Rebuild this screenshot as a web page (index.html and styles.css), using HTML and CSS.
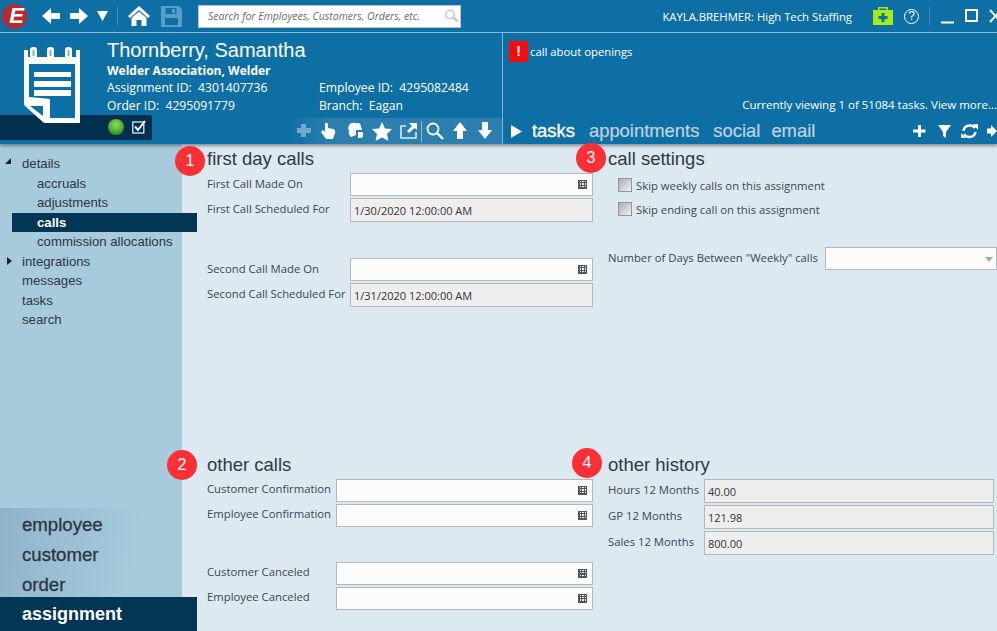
FILE: index.html
```html
<!DOCTYPE html>
<html lang="en">
<head>
  <meta charset="UTF-8">
  <title>Assignment - calls</title>
  <link rel="stylesheet" href="styles.css">
</head>
<body>
  <!-- top bar -->
  <div class="topbar">
    <div class="logo"><span>E</span></div>
    <svg class="tb-nav" width="76" height="20" viewBox="0 0 76 20">
      <path fill="#fff" d="M1 10 L10 2 L10 7 L19 7 L19 13 L10 13 L10 18 Z"/>
      <path fill="#fff" d="M47 10 L38 2 L38 7 L29 7 L29 13 L38 13 L38 18 Z"/>
      <path fill="#fff" d="M56 5 L67 5 L61.500 15 Z"/>
    </svg>
    <div class="tb-sep"></div>
    <svg class="tb-home" width="22" height="20" viewBox="0 0 22 20">
      <path fill="#fff" d="M11 0 L22 10 L20 12 L11 4 L2 12 L0 10 Z"/>
      <path fill="#fff" d="M3.500 12 L11 5.500 L18.500 12 L18.500 20 L13.500 20 L13.500 14 L8.500 14 L8.500 20 L3.500 20 Z"/>
    </svg>
    <svg class="tb-save" width="21" height="21" viewBox="0 0 21 21">
      <path fill="#5a9dc6" d="M0 0 L18 0 L21 3 L21 21 L0 21 Z"/>
      <rect x="4.500" y="2" width="11" height="6" fill="#0e6fa5"/>
      <rect x="11" y="3" width="3" height="4" fill="#5a9dc6"/>
      <rect x="4" y="12" width="13" height="7" fill="#0e6fa5"/>
    </svg>
    <div class="search">
      <span>Search for Employees, Customers, Orders, etc.</span>
      <svg width="15" height="14" viewBox="0 0 15 14">
        <circle cx="6" cy="5.500" r="4.200" fill="none" stroke="#c9c9c9" stroke-width="1.600"/>
        <path d="M9 8.500 L14 12.500" stroke="#c9c9c9" stroke-width="2.400"/>
      </svg>
    </div>
    <div class="user">KAYLA.BREHMER: High Tech Staffing</div>
    <svg class="tb-kit" width="20" height="18" viewBox="0 0 20 18">
      <path fill="#a6ea1a" d="M0 3 L5 3 L5 1 Q5 0 6 0 L14 0 Q15 0 15 1 L15 3 L20 3 L20 18 L0 18 Z"/>
      <rect x="6.500" y="1.500" width="7" height="1.500" fill="#0e6fa5"/>
      <path fill="#0e6fa5" d="M8.500 6 L11.500 6 L11.500 9 L14.500 9 L14.500 12 L11.500 12 L11.500 15 L8.500 15 L8.500 12 L5.500 12 L5.500 9 L8.500 9 Z"/>
    </svg>
    <div class="help">?</div>
    <div class="tb-sep tb-sep-right"></div>
    <svg class="win" width="56" height="16" viewBox="0 0 56 16">
      <path d="M0 14.500 L13 14.500" stroke="#fff" stroke-width="2"/>
      <rect x="25" y="2" width="11" height="11" fill="none" stroke="#fff" stroke-width="2"/>
      <path d="M49 2 L60 14 M60 2 L49 14" stroke="#fff" stroke-width="2"/>
    </svg>
  </div>

  <!-- record header -->
  <div class="header">
    <div class="rec">
      <div class="rec-band">
        <div class="ball"></div>
        <svg class="band-check" width="14" height="14" viewBox="0 0 14 14">
          <rect x="0.800" y="2" width="11" height="11" fill="none" stroke="#dfe9ef" stroke-width="1.300"/>
          <path d="M3 6.500 L6 10 L13 1" fill="none" stroke="#fff" stroke-width="2"/>
        </svg>
      </div>
      <svg class="notepad" width="56" height="77" viewBox="0 0 56 77">
        <path fill="#fff" d="M0 3 L56 3 L56 76 L20 76 L0 58 Z"/>
        <path fill="#0e6fa5" d="M4 3 L52 3 L52 10 L4 10 Z"/>
        <rect x="6" y="0" width="7" height="14" rx="3" fill="#fff"/>
        <rect x="23" y="0" width="7" height="14" rx="3" fill="#fff"/>
        <rect x="41" y="0" width="7" height="14" rx="3" fill="#fff"/>
        <rect x="8.500" y="3" width="2" height="6" fill="#7fb2d0"/>
        <rect x="25.500" y="3" width="2" height="6" fill="#7fb2d0"/>
        <rect x="43.500" y="3" width="2" height="6" fill="#7fb2d0"/>
        <path fill="#0e6fa5" d="M5 17 L51 17 L51 71 L26 71 L26 52 L5 50 Z"/>
        <path fill="#0e6fa5" d="M6 59 L19 59 L19 69 Z"/>
        <rect x="10" y="25" width="37" height="5" fill="#fff"/>
        <rect x="10" y="34" width="37" height="6" fill="#fff"/>
        <rect x="10" y="43" width="37" height="6" fill="#fff"/>
      </svg>
      <div class="rec-info">
        <div class="rec-name">Thornberry, Samantha</div>
        <div class="rec-job">Welder Association, Welder</div>
        <div class="rec-ids">
          <span>Assignment ID:&nbsp; 4301407736</span><span>Employee ID:&nbsp; 4295082484</span>
          <span>Order ID:&nbsp; 4295091779</span><span>Branch:&nbsp; Eagan</span>
        </div>
      </div>
      <div class="rec-tools">
        <svg width="212" height="25" viewBox="0 0 212 25">
          <path fill="#73aacb" d="M11 6 L16 6 L16 10 L21 10 L21 15 L16 15 L16 19 L11 19 L11 15 L7 15 L7 10 L11 10 Z"/>
          <path fill="#fff" d="M35 5 Q37 4 38 6 L38 10 L43 11 Q46 12 45 15 L43 21 L36 21 L31 14 L33 12 L35 14 Z"/>
          <path fill="#fff" d="M60 6 Q62 4 65 5 L69 5 Q71 6 71 9 L72 12 L66 12 L66 17 L61 19 Q58 16 59 13 Q57 9 60 6 Z M68 14 L73 14 L73 19 L71 20 L68 20 Z"/>
          <path fill="#fff" d="M92 4 L95 10.500 L102 11 L97 16 L98.500 23 L92 19.500 L85.500 23 L87 16 L82 11 L89 10.500 Z"/>
          <path fill="none" stroke="#dcebf4" stroke-width="1.600" d="M116 8 L111 8 L111 20 L126 20 L126 14"/>
          <path fill="#fff" d="M119 5 L127 5 L127 12 L124.500 10 L119 15 L117 13 L122 8 Z"/>
          <path d="M131.500 3 L131.500 24" stroke="#8ab8d3" stroke-width="1"/>
          <circle cx="143" cy="11" r="5.500" fill="none" stroke="#fff" stroke-width="1.800"/>
          <path d="M147 15 L153 21" stroke="#fff" stroke-width="2.400"/>
          <path fill="#fff" d="M170 4 L177 13 L173 13 L173 21 L167 21 L167 13 L163 13 Z"/>
          <path fill="#fff" d="M195 21 L202 12 L198 12 L198 4 L192 4 L192 12 L188 12 Z"/>
        </svg>
      </div>
    </div>
    <div class="tasks">
      <div class="note"><span class="alert">!</span>call about openings</div>
      <div class="viewing">Currently viewing 1 of 51084 tasks. View more...</div>
      <div class="tabs">
        <svg class="tab-play" width="11" height="13" viewBox="0 0 11 13"><path fill="#fff" d="M0 0 L11 6.500 L0 13 Z"/></svg>
        <span class="tab tab-on">tasks</span>
        <span class="tab">appointments</span>
        <span class="tab">social</span>
        <span class="tab tab-email">email</span>
        <svg class="tab-tools" width="84" height="18" viewBox="0 0 84 18">
          <path fill="#fff" d="M5 3 L8 3 L8 7.500 L12.500 7.500 L12.500 10.500 L8 10.500 L8 15 L5 15 L5 10.500 L0 10.500 L0 7.500 L5 7.500 Z"/>
          <path fill="#fff" d="M25 3 L38 3 L33 10 L33 16 L30 14 L30 10 Z"/>
          <path fill="none" stroke="#fff" stroke-width="2.400" d="M62 6 Q60 3 56 3.500 Q51 4 50.500 9 M51 12 Q53 15.500 57 15 Q61.500 14.500 62.500 10"/>
          <path fill="#fff" d="M60 2 L65 2 L65 8 Z M48 11 L53 16 L48 16 Z"/>
          <path fill="#fff" d="M84 9 L78 3 L78 6.500 L74 6.500 L74 11.500 L78 11.500 L78 15 Z"/>
        </svg>
      </div>
    </div>
  </div>

  <div class="body">
    <!-- left menu -->
    <div class="side">
      <ul class="tree">
        <li><i class="arrow-open"></i>details</li>
        <li class="sub">accruals</li>
        <li class="sub">adjustments</li>
        <li class="sub selected">calls</li>
        <li class="sub">commission allocations</li>
        <li><i class="arrow-closed"></i>integrations</li>
        <li>messages</li>
        <li>tasks</li>
        <li>search</li>
      </ul>
      <ul class="entity">
        <li>employee</li>
        <li>customer</li>
        <li>order</li>
        <li class="active">assignment</li>
      </ul>
    </div>

    <!-- form -->
    <div class="content">
      <section class="sec">
        <span class="badge badge1">1</span>
        <h2>first day calls</h2>
        <div class="row"><label>First Call Made On</label><div class="inp"><i class="cal"></i></div></div>
        <div class="row"><label>First Call Scheduled For</label><div class="inp ro">1/30/2020 12:00:00 AM</div></div>
        <div class="row row-gap"><label>Second Call Made On</label><div class="inp"><i class="cal"></i></div></div>
        <div class="row"><label>Second Call Scheduled For</label><div class="inp ro">1/31/2020 12:00:00 AM</div></div>
      </section>

      <section class="sec">
        <span class="badge badge3">3</span>
        <h2>call settings</h2>
        <div class="chk"><i></i>Skip weekly calls on this assignment</div>
        <div class="chk"><i></i>Skip ending call on this assignment</div>
        <div class="row row-days"><label>Number of Days Between "Weekly" calls</label><div class="select"><b></b></div></div>
      </section>

      <section class="sec sec-low">
        <span class="badge badge2">2</span>
        <h2>other calls</h2>
        <div class="row row-short"><label>Customer Confirmation</label><div class="inp"><i class="cal"></i></div></div>
        <div class="row row-short"><label>Employee Confirmation</label><div class="inp"><i class="cal"></i></div></div>
        <div class="row row-short row-gap2"><label>Customer Canceled</label><div class="inp"><i class="cal"></i></div></div>
        <div class="row row-short"><label>Employee Canceled</label><div class="inp"><i class="cal"></i></div></div>
      </section>

      <section class="sec sec-low">
        <span class="badge badge4">4</span>
        <h2>other history</h2>
        <div class="row row-hist"><label>Hours 12 Months</label><div class="inp ro">40.00</div></div>
        <div class="row row-hist"><label>GP 12 Months</label><div class="inp ro">121.98</div></div>
        <div class="row row-hist"><label>Sales 12 Months</label><div class="inp ro">800.00</div></div>
      </section>
    </div>
  </div>
</body>
</html>
```

FILE: styles.css
```css
body {
  margin: 0;
  width: 997px;
  height: 631px;
  overflow: hidden;
  font-family: "Open Sans", "Liberation Sans", sans-serif;
  font-size: 11.300px;
  color: #3a4654;
  background: #dce9f1;
}

/* top bar */
.topbar {
  height: 32px;
  display: flex;
  align-items: center;
  background: #0e6fa5;
  border-bottom: 1px solid #8dbbd6;
  color: #fff;
}
.logo {
  width: 25px;
  height: 25px;
  margin-left: 2px;
  border-radius: 50%;
  background: #b52a33;
  display: flex;
  align-items: center;
  justify-content: center;
}
.logo span {
  font: italic bold 22px "Liberation Sans", sans-serif;
  color: #fff;
  margin-left: 4px;
}
.tb-nav { margin-left: 14px; }
.tb-sep {
  width: 1px;
  height: 20px;
  background: #3d8bb7;
}
.tb-home { margin-left: 10px; }
.tb-save { margin-left: 11px; }
.search {
  width: 263px;
  height: 23px;
  margin-left: 16px;
  padding-left: 9px;
  box-sizing: border-box;
  display: flex;
  align-items: center;
  justify-content: space-between;
  background: #fff;
  border: 1px solid #b9c3c9;
  font-style: italic;
  font-size: 10.500px;
  color: #6c6c6c;
}
.search svg { margin-right: 1px; }
.user {
  margin-left: auto;
  font-size: 11.300px;
}
.tb-kit { margin-left: 21px; }
.help {
  width: 13px;
  height: 13px;
  margin-left: 11px;
  border: 1.500px solid #fff;
  border-radius: 50%;
  text-align: center;
  font: 12px/13px "Liberation Sans", sans-serif;
}
.tb-sep-right { margin-left: 10px; }
.win { margin-left: 11px; flex-shrink: 0; }

/* record header */
.header {
  height: 111px;
  display: flex;
  background: #0e6fa5;
  color: #fff;
  position: relative;
  box-shadow: 0 2px 3px rgba(60, 70, 80, 0.55);
  z-index: 3;
}
.rec {
  width: 503px;
  position: relative;
  box-sizing: border-box;
  padding: 5px 0 0 107px;
  border-right: 1px solid #7eb2d0;
}
.notepad {
  position: absolute;
  left: 24px;
  top: 14px;
}
.rec-band {
  position: absolute;
  left: 0;
  top: 82px;
  width: 152px;
  height: 25px;
  background: #03304f;
}
.ball {
  position: absolute;
  left: 108px;
  top: 4px;
  width: 16px;
  height: 16px;
  border-radius: 50%;
  background: radial-gradient(circle at 50% 35%, #8fdc5a, #2f9a1c 75%);
}
.band-check {
  position: absolute;
  left: 132px;
  top: 5px;
}
.rec-name {
  font: 20px/24px "Liberation Sans", sans-serif;
}
.rec-job {
  font-size: 12px;
  font-weight: 700;
  line-height: 17px;
}
.rec-ids {
  display: grid;
  grid-template-columns: 212px auto;
  font-size: 12.150px;
  line-height: 18px;
}
.rec-tools {
  position: absolute;
  left: 290px;
  right: 0;
  top: 85px;
  height: 26px;
  background: linear-gradient(90deg, #0e6fa5, #2b7fae 40px);
}
.rec-tools svg { display: block; }

.tasks {
  flex: 1;
  display: flex;
  flex-direction: column;
  min-width: 0;
}
.note {
  display: flex;
  align-items: center;
  margin: 8px 0 0 6px;
  font-size: 11.300px;
}
.alert {
  width: 19px;
  height: 21px;
  margin-right: 2px;
  background: #f50c0c;
  text-align: center;
  font: bold 14px/21px "Liberation Sans", sans-serif;
}
.viewing {
  margin-top: 35px;
  text-align: right;
  white-space: nowrap;
  font-size: 11.500px;
  line-height: 15px;
}
.tabs {
  display: flex;
  align-items: center;
  margin-top: 7px;
  padding-left: 8px;
  font: 18.400px/24px "Liberation Sans", sans-serif;
  white-space: nowrap;
}
.tab { margin-left: 14px; color: #bed3e0; -webkit-text-stroke: 0.200px #bed3e0; }
.tab-play + .tab { margin-left: 10px; }
.tab-on { color: #fff; -webkit-text-stroke: 0.300px #fff; }
.tab-email { margin-left: 11px; }
.tab-tools {
  position: absolute;
  left: 913px;
  top: 89px;
}

/* body */
.body {
  display: flex;
  height: 488px;
}
.side {
  width: 182px;
  flex-shrink: 0;
  display: flex;
  flex-direction: column;
  justify-content: space-between;
  background: #a8cadd;
  position: relative;
  z-index: 2;
}
.tree, .entity {
  list-style: none;
  margin: 0;
  padding: 0;
  font-family: "Liberation Sans", sans-serif;
  color: #2c3640;
}
.tree {
  padding-top: 10px;
  font-size: 13.200px;
}
.tree li {
  position: relative;
  height: 19.500px;
  line-height: 20px;
  padding-left: 22px;
}
.tree .sub {
  padding-left: 25px;
  margin-left: 12px;
}
.tree .selected {
  margin-right: -15px;
  line-height: 19px;
  background: #033655;
  color: #fff;
  font-weight: 700;
}
.arrow-open {
  position: absolute;
  left: 5px;
  top: 4px;
  width: 0;
  height: 0;
  border-bottom: 6px solid #222;
  border-left: 6px solid transparent;
}
.arrow-closed {
  position: absolute;
  left: 7px;
  top: 5px;
  width: 0;
  height: 0;
  border-left: 5px solid #222;
  border-top: 4px solid transparent;
  border-bottom: 4px solid transparent;
}
.entity {
  height: 124px;
  padding-top: 2px;
  box-sizing: border-box;
  background: linear-gradient(100deg, #8fb4ca, #a7c9dc 70%);
  font-size: 18.600px;
  font-weight: 400;
  -webkit-text-stroke: 0.300px #2c3640;
}
.entity li {
  height: 30px;
  line-height: 30px;
  padding-left: 22px;
}
.entity .active {
  height: 34px;
  line-height: 35px;
  margin-top: -3px;
  margin-right: -15px;
  background: #033655;
  color: #fff;
  font-size: 18px;
  font-weight: 700;
  -webkit-text-stroke: 0;
}

/* form sections */
.content {
  flex: 1;
  display: grid;
  grid-template-columns: 386px 389px;
  grid-template-rows: 309px auto;
  column-gap: 15px;
  padding-left: 25px;
}
.sec { position: relative; }
.sec h2 {
  margin: 3px 0 0;
  height: 26px;
  font: 400 18.500px/24px "Liberation Sans", sans-serif;
  color: #2e3a46;
}
.sec-low h2 { margin-top: 0; height: 26px; }
.badge {
  position: absolute;
  width: 30px;
  height: 30px;
  border-radius: 50%;
  background: #fb3036;
  color: #fff;
  text-align: center;
  font: 16px/30px "Liberation Sans", sans-serif;
  z-index: 4;
}
.badge1 { left: -32px; top: 2px; }
.badge3 { left: -32px; top: -1px; }
.badge2 { left: -40px; top: -3px; }
.badge4 { left: -36px; top: -5px; }

.row {
  display: flex;
  align-items: center;
  margin-bottom: 2px;
}
.row label {
  width: 143px;
  flex-shrink: 0;
  margin-top: -3px;
  white-space: nowrap;
}
.inp {
  flex: 1;
  height: 23px;
  box-sizing: border-box;
  border: 1px solid #b4b8bb;
  background: #fcfcfc;
  display: flex;
  align-items: center;
  justify-content: flex-end;
  padding: 0 5px;
  font-size: 11px;
  color: #333;
}
.inp.ro {
  height: 24px;
  justify-content: flex-start;
  padding: 0 3px;
  background: #eeeeee;
}
.cal {
  width: 7px;
  height: 7px;
  border: 0.500px solid #555;
  background:
    repeating-linear-gradient(90deg, #555 0 1px, transparent 1px 2.500px),
    repeating-linear-gradient(0deg, #555 0 1px, #eee 1px 2.500px);
}
.row-gap { margin-top: 36px; }
.row-short label { width: 129px; margin-top: -5px; }
.row-short .inp { height: 23px; }
.row-gap2 { margin-top: 35px; }
.row-hist {
  width: 386px;
  margin-bottom: 2px;
}
.row-hist label { width: 96px; margin-top: -4px; }

.chk {
  display: flex;
  align-items: center;
  height: 24px;
  margin-left: 10px;
}
.chk i {
  width: 12px;
  height: 12px;
  margin-right: 4px;
  border: 1px solid #8e9499;
  background: linear-gradient(135deg, #aaa, #f2f2f2);
}
.row-days {
  margin-top: 26px;
}
.row-days label { width: 217px; margin-top: -3px; }
.select {
  flex: 1;
  height: 23px;
  box-sizing: border-box;
  border: 1px solid #b4b8bb;
  background: #fcfcfc;
  position: relative;
}
.select b {
  position: absolute;
  right: 3px;
  top: 9px;
  width: 0;
  height: 0;
  border-left: 4px solid transparent;
  border-right: 4px solid transparent;
  border-top: 5px solid #a9adb0;
}
```
